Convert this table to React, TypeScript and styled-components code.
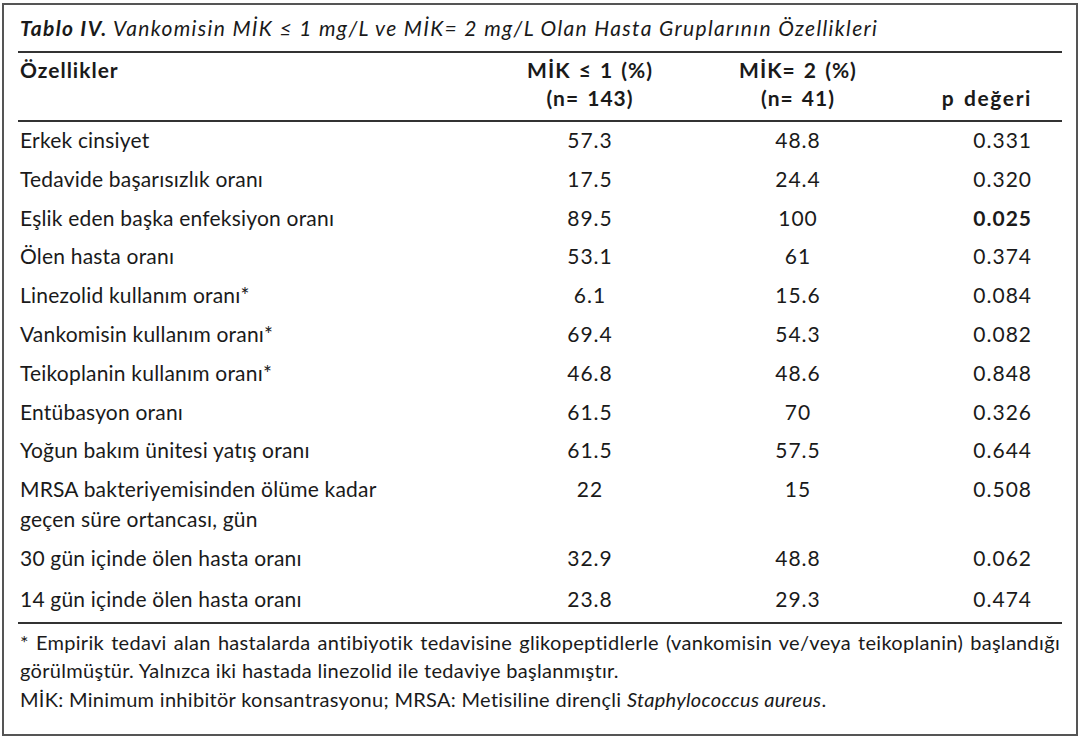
import React from "react";
import styled, { createGlobalStyle } from "styled-components";

const GlobalStyle = createGlobalStyle`
  html, body {
    margin: 0;
    padding: 0;
    background: #ffffff;
  }
  body {
    font-family: Lato, "Liberation Sans", sans-serif;
    color: #1a1a1a;
  }
`;

const Frame = styled.div`
  box-sizing: border-box;
  width: 1076px;
  height: 733px;
  margin: 3px 0 0 2px;
  border: 2px solid #555555;
  padding: 0 14px;
`;

const Title = styled.div`
  font-size: 21px;
  line-height: 30px;
  font-style: italic;
  letter-spacing: 1.35px;
  white-space: nowrap;
  padding: 8px 2px 0;
  margin-bottom: 8px;

  & > b {
    font-weight: 700;
  }
`;

const Table = styled.table`
  width: 100%;
  border-collapse: collapse;
  table-layout: fixed;
  border-top: 2px solid #333333;
  border-bottom: 2px solid #333333;
  font-size: 21px;
`;

const HeadRow = styled.tr`
  border-bottom: 2px solid #333333;
`;

const Th = styled.th<{ $align?: "left" | "center" | "right" }>`
  font-weight: 700;
  line-height: 28px;
  letter-spacing: ${(p) => (p.$align === "right" ? "1.6px" : "1px")};
  word-spacing: 2px;
  padding: 3px 2px 8px;
  text-align: ${(p) => p.$align ?? "left"};
  vertical-align: ${(p) => (p.$align === "right" ? "bottom" : "top")};
  padding-right: ${(p) => (p.$align === "right" ? "30px" : "2px")};
`;

const Td = styled.td<{ $align?: "left" | "center" | "right"; $bold?: boolean }>`
  line-height: 30px;
  padding: 3px 2px 5.8px;
  text-align: ${(p) => p.$align ?? "left"};
  vertical-align: top;
  font-weight: ${(p) => (p.$bold ? 700 : 400)};
  letter-spacing: ${(p) => (p.$align ? "1px" : "0.2px")};
  padding-right: ${(p) => (p.$align === "right" ? "30px" : "2px")};

  tr:last-child > & {
    padding-top: 5px;
    padding-bottom: 8px;
  }
`;

const Notes = styled.div`
  font-size: 20px;
  line-height: 28.5px;
  letter-spacing: 0.3px;
  padding: 4px 2px 0;
`;

const NoteLine = styled.div<{ $justify?: boolean }>`
  white-space: nowrap;
  text-align: ${(p) => (p.$justify ? "justify" : "left")};
  text-align-last: ${(p) => (p.$justify ? "justify" : "left")};
`;

type Row = { label: React.ReactNode; a: string; b: string; p: string; bold?: boolean };

const rows: Row[] = [
  { label: "Erkek cinsiyet", a: "57.3", b: "48.8", p: "0.331" },
  { label: "Tedavide başarısızlık oranı", a: "17.5", b: "24.4", p: "0.320" },
  { label: "Eşlik eden başka enfeksiyon oranı", a: "89.5", b: "100", p: "0.025", bold: true },
  { label: "Ölen hasta oranı", a: "53.1", b: "61", p: "0.374" },
  { label: "Linezolid kullanım oranı*", a: "6.1", b: "15.6", p: "0.084" },
  { label: "Vankomisin kullanım oranı*", a: "69.4", b: "54.3", p: "0.082" },
  { label: "Teikoplanin kullanım oranı*", a: "46.8", b: "48.6", p: "0.848" },
  { label: "Entübasyon oranı", a: "61.5", b: "70", p: "0.326" },
  { label: "Yoğun bakım ünitesi yatış oranı", a: "61.5", b: "57.5", p: "0.644" },
  {
    label: (
      <>
        MRSA bakteriyemisinden ölüme kadar
        <br />
        geçen süre ortancası, gün
      </>
    ),
    a: "22",
    b: "15",
    p: "0.508",
  },
  { label: "30 gün içinde ölen hasta oranı", a: "32.9", b: "48.8", p: "0.062" },
  { label: "14 gün içinde ölen hasta oranı", a: "23.8", b: "29.3", p: "0.474" },
];

export default function App() {
  return (
    <>
      <GlobalStyle />
      <Frame>
        <Title>
          <b>Tablo IV.</b> Vankomisin MİK ≤ 1 mg/L ve MİK= 2 mg/L Olan Hasta Gruplarının Özellikleri
        </Title>
        <Table>
          <colgroup>
            <col style={{ width: 482 }} />
            <col style={{ width: 180 }} />
            <col style={{ width: 236 }} />
            <col style={{ width: 146 }} />
          </colgroup>
          <thead>
            <HeadRow>
              <Th>Özellikler</Th>
              <Th $align="center">
                MİK ≤ 1 (%)
                <br />
                (n= 143)
              </Th>
              <Th $align="center">
                MİK= 2 (%)
                <br />
                (n= 41)
              </Th>
              <Th $align="right">p değeri</Th>
            </HeadRow>
          </thead>
          <tbody>
            {rows.map((r, i) => (
              <tr key={i}>
                <Td>{r.label}</Td>
                <Td $align="center">{r.a}</Td>
                <Td $align="center">{r.b}</Td>
                <Td $align="right" $bold={r.bold}>
                  {r.p}
                </Td>
              </tr>
            ))}
          </tbody>
        </Table>
        <Notes>
          <NoteLine $justify>
            * Empirik tedavi alan hastalarda antibiyotik tedavisine glikopeptidlerle (vankomisin ve/veya teikoplanin) başlandığı
          </NoteLine>
          <NoteLine>görülmüştür. Yalnızca iki hastada linezolid ile tedaviye başlanmıştır.</NoteLine>
          <NoteLine>
            MİK: Minimum inhibitör konsantrasyonu; MRSA: Metisiline dirençli <i>Staphylococcus aureus</i>.
          </NoteLine>
        </Notes>
      </Frame>
    </>
  );
}
